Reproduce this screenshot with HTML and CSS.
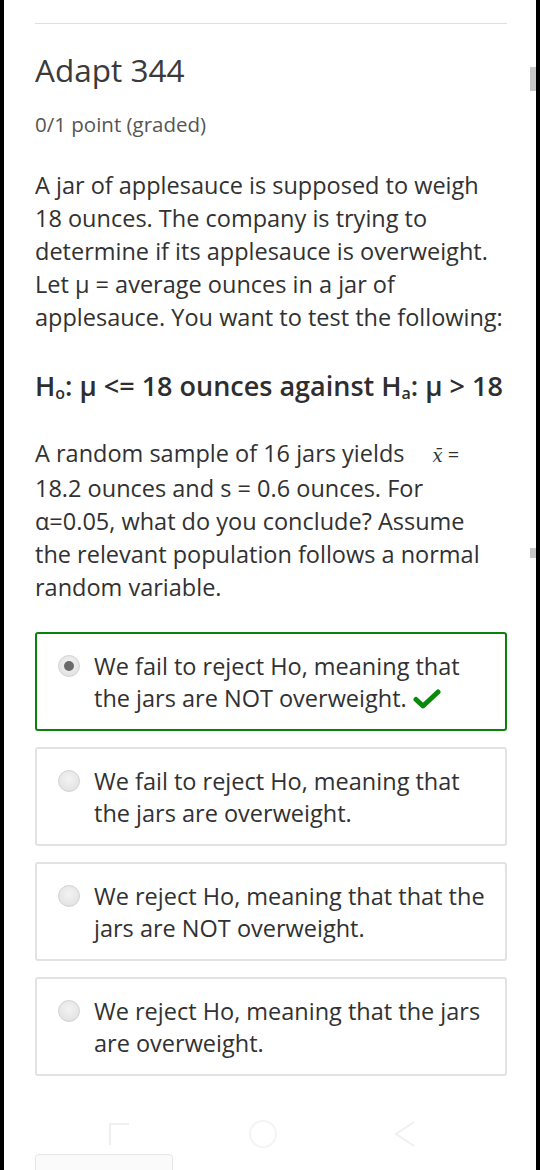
FILE: index.html
```html
<!DOCTYPE html>
<html>
<head>
<meta charset="utf-8">
<link rel="stylesheet" href="styles.css">
</head>
<body>
<div class="frame">
  <div class="page">
    <hr class="rule">
    <h1 class="title">Adapt 344</h1>
    <div class="points">0/1 point (graded)</div>
    <p class="para">A jar of applesauce is supposed to weigh 18 ounces. The company is trying to determine if its applesauce is overweight. Let μ = average ounces in a jar of applesauce. You want to test the following:</p>
    <p class="hyp">H<sub>o</sub>: μ &lt;= 18 ounces against H<sub>a</sub>: μ &gt; 18</p>
    <p class="para">A random sample of 16 jars yields <span class="math"><span class="xbar">x̄</span><span class="eq">=</span></span> 18.2 ounces and s = 0.6 ounces. For α=0.05, what do you conclude? Assume the relevant population follows a normal random variable.</p>

    <div class="options">
      <label class="option correct">
        <span class="radio checked"></span>
        <span class="otext">We fail to reject Ho, meaning that the jars are NOT overweight. <svg class="check" width="28" height="20" viewBox="0 0 28 20"><path d="M3 10.5 L10 17 L25 3" fill="none" stroke="#0a8a0a" stroke-width="5" stroke-linecap="round" stroke-linejoin="round"/></svg></span>
      </label>
      <label class="option">
        <span class="radio"></span>
        <span class="otext">We fail to reject Ho, meaning that the jars are overweight.</span>
      </label>
      <label class="option">
        <span class="radio"></span>
        <span class="otext">We reject Ho, meaning that that the jars are NOT overweight.</span>
      </label>
      <label class="option">
        <span class="radio"></span>
        <span class="otext">We reject Ho, meaning that the jars are overweight.</span>
      </label>
    </div>

    <div class="navghost">
      <span class="g-square"></span>
      <span class="g-circle"></span>
      <svg class="g-back" width="30" height="30" viewBox="0 0 30 30"><path d="M24 3 L6 15 L24 27" fill="none" stroke="#f0f0f0" stroke-width="2"/></svg>
    </div>
    <div class="submitbox"></div>
  </div>
  <span class="thumb thumb1"></span>
  <span class="thumb thumb2"></span>
</div>
</body>
</html>
```

FILE: styles.css
```css
html, body {
  margin: 0;
  padding: 0;
  background: #000;
}
.frame {
  position: relative;
  width: 532px;
  height: 1170px;
  margin: 0 4px;
  background: #fff;
  overflow: hidden;
  font-family: "Open Sans", "DejaVu Sans", sans-serif;
  color: #313131;
}
.page {
  padding: 23px 29px 0 31px;
}
.rule {
  margin: 0;
  border: 0;
  border-top: 1px solid #dedede;
  height: 0;
}
.title {
  margin: 26px 0 0 0;
  font-size: 31.5px;
  font-weight: 400;
  line-height: 40px;
  color: #3a3a3a;
}
.points {
  margin-top: 20px;
  font-size: 20.5px;
  line-height: 28px;
  color: #555;
}
.para {
  margin: 31px 3px 0 0;
  font-size: 23.5px;
  line-height: 33px;
  color: #313131;
}
.hyp {
  margin: 35px 0 0 0;
  font-size: 27px;
  line-height: 34px;
  font-weight: 600;
  color: #2e2e2e;
}
.hyp sub {
  font-size: 16px;
  vertical-align: -3px;
  line-height: 0;
}
.hyp + .para {
  margin-top: 34px;
}
.math {
  display: inline-block;
  padding-left: 22px;
  white-space: nowrap;
}
.xbar {
  font-family: "DejaVu Serif", "Liberation Serif", serif;
  font-style: italic;
  font-size: 18px;
}
.eq {
  font-size: 20px;
  margin-left: 5px;
}
.options {
  margin-top: 28px;
  display: flex;
  flex-direction: column;
  gap: 16px;
}
.option {
  display: flex;
  align-items: flex-start;
  gap: 14px;
  border: 2px solid #e2e2e2;
  border-radius: 3px;
  padding: 16px 18px 15px 21px;
  min-height: 62px;
}
.option.correct {
  border-color: #0b810b;
}
.radio {
  flex: 0 0 auto;
  width: 20px;
  height: 20px;
  border-radius: 50%;
  margin-top: 5px;
  border: 1px solid #d3d3d3;
  background: radial-gradient(circle at 50% 40%, #f3f3f3 0%, #e4e4e4 70%, #d6d6d6 100%);
  position: relative;
}
.radio.checked::after {
  content: "";
  position: absolute;
  left: 5px;
  top: 5px;
  width: 10px;
  height: 10px;
  border-radius: 50%;
  background: #6a6a6a;
}
.otext {
  font-size: 23.5px;
  line-height: 32px;
  color: #313131;
}
.check {
  vertical-align: -2px;
  margin-left: 0;
}
.navghost {
  display: flex;
  align-items: center;
  height: 40px;
  margin-top: 38px;
  padding-left: 74px;
}
.g-square {
  width: 18px;
  height: 20px;
  border-top: 2px solid #efefef;
  border-left: 2px solid #efefef;
}
.g-circle {
  width: 24px;
  height: 24px;
  border-radius: 50%;
  border: 2px solid #f4f4f4;
  margin-left: 120px;
}
.g-back {
  margin-left: 113px;
}
.submitbox {
  margin-top: 0;
  width: 136px;
  height: 30px;
  border: 1px solid #e6e6e6;
  border-radius: 4px;
  background: #fafafa;
}
.thumb {
  position: absolute;
  right: 0;
  width: 6px;
  background: #c8c8c8;
}
.thumb1 {
  top: 67px;
  height: 24px;
}
.thumb2 {
  top: 548px;
  height: 10px;
}
```
